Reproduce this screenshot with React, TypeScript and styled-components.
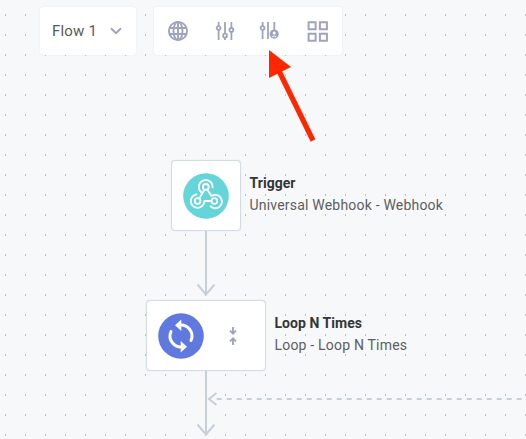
import React from 'react';
import styled, { createGlobalStyle } from 'styled-components';

const GlobalStyle = createGlobalStyle`
  * { box-sizing: border-box; }
  body { margin: 0; font-family: Roboto, "Liberation Sans", sans-serif; }
`;

const Canvas = styled.main`
  position: relative;
  width: 526px;
  height: 439px;
  overflow: hidden;
  background-color: #f7f8fa;
  background-image: conic-gradient(from 90deg at 19px 18px, #bcbdc0 90deg, transparent 0);
  background-size: 20px 20px;
  background-position: -14px -4px;
`;

const TopBar = styled.header`
  position: relative;
  display: flex;
  gap: 18px;
  padding: 7px 0 0 40px;
`;

const Panel = styled.div<{ $width: number }>`
  display: flex;
  align-items: center;
  flex: none;
  width: ${(p) => p.$width}px;
  height: 48px;
  background: #fff;
  border-radius: 3px;
  box-shadow: 0 0 2px rgba(205, 222, 237, 0.6);
`;

const FlowSelect = styled(Panel)`
  justify-content: space-between;
  padding: 0 14px 0 12px;
  color: #5b5b5d;
  font-size: 15px;
  letter-spacing: 0.2px;
`;

const Tools = styled(Panel)`
  padding: 0 14px 0 13px;
`;

const Icon = styled.svg<{ $before?: number }>`
  display: block;
  flex: none;
  margin-left: ${(p) => p.$before ?? 0}px;
  fill: none;
  stroke: #a0a3bf;
`;

const Edges = styled.svg`
  position: absolute;
  inset: 0;
  fill: none;
  stroke: #c5d0d9;
  stroke-width: 2;
`;

const Pointer = styled.svg`
  position: absolute;
  left: 260px;
  top: 45px;
`;

const FlowNode = styled.article<{ $x: number; $y: number }>`
  position: absolute;
  left: ${(p) => p.$x}px;
  top: ${(p) => p.$y}px;
  display: flex;
  gap: 8px;
`;

const NodeCard = styled.div<{ $width: number }>`
  display: flex;
  align-items: center;
  gap: 24.5px;
  width: ${(p) => p.$width}px;
  height: 71px;
  padding-left: 11px;
  background: #fff;
  border: 1px solid #d3dce3;
  border-radius: 4px;
  box-shadow: 0 0 1px rgba(197, 208, 217, 0.8);
`;

const NodeText = styled.div`
  padding: 12px 0 0 0.5px;
  font-size: 14px;
  line-height: 22px;
  letter-spacing: 0.2px;
  color: #5d5e61;
  white-space: nowrap;
`;

const NodeTitle = styled.div`
  font-weight: 700;
  letter-spacing: 0.04px;
  color: #343538;
`;

const Globe = () => (
  <Icon width="22" height="22" viewBox="0 0 22 22" strokeWidth="1.9">
    <circle cx="11" cy="11" r="9.1" />
    <ellipse cx="11" cy="11" rx="4.5" ry="9.1" />
    <path d="M11 2v18M2.7 8h16.6M2.7 14h16.6" />
  </Icon>
);

const Sliders = () => (
  <Icon $before={26} width="20" height="20" viewBox="0 0 20 20" strokeWidth="1.8">
    <path d="M3.6 1v4M3.6 9.2V19M10 1v11.5M10 17v2M16.4 1v5.7M16.4 11v8" />
    <circle cx="3.6" cy="7.1" r="1.9" />
    <circle cx="10" cy="14.6" r="2" />
    <circle cx="16.4" cy="8.9" r="1.9" />
  </Icon>
);

const UserSliders = () => (
  <Icon $before={24} width="20" height="20" viewBox="0 0 20 20" strokeWidth="1.8">
    <path d="M3.6 1v4M3.6 9.2V18M9 1v17M15.3 1v8.5" />
    <circle cx="3.6" cy="7" r="1.9" />
    <circle cx="15.2" cy="13.1" r="4.6" fill="#a0a3bf" stroke="none" />
    <circle cx="15.2" cy="11.9" r="1.5" fill="#fff" stroke="none" />
    <path d="M13.2 15.7q2-1.4 4 0" stroke="#fff" strokeWidth="1" />
  </Icon>
);

const Grid = () => (
  <Icon $before={28} width="21" height="21" viewBox="0 0 21 21" strokeWidth="2">
    <path d="M1.6 1.3h7v7h-7zM12.9 1.3h7v7h-7zM1.6 12.7h7v7h-7zM12.9 12.7h7v7h-7z" />
  </Icon>
);

const Webhook = () => (
  <svg width="46" height="46" viewBox="0 0 46 46" fill="none">
    <circle cx="23" cy="23" r="22.8" fill="#64d5d8" />
    <g stroke="#fff" strokeWidth="1.8" strokeLinecap="round" strokeLinejoin="round">
      <circle cx="22.8" cy="13.9" r="2.9" />
      <circle cx="14.6" cy="28" r="2.9" />
      <circle cx="31.4" cy="28" r="2.9" />
      <path d="M21.4 16.7 16.3 25.4M24.3 16.6 28.4 23.1A6.7 6.7 0 1 1 27.4 33.2" />
      <path d="M28.4 28H21.4A6.8 6.8 0 1 1 13.6 21.3" />
      <path d="M18.2 19.2A6.9 6.9 0 1 1 29.6 14.4" />
    </g>
  </svg>
);

const Loop = () => (
  <svg width="46" height="46" viewBox="0 0 46 46" fill="none">
    <circle cx="23" cy="23" r="22.8" fill="#6079df" />
    <path d="M21 12.2A11 11 0 0 1 33 27.5M25 33.8A11 11 0 0 1 13 18.5" stroke="#fff" strokeWidth="3" strokeLinecap="round" />
    <path d="m17 12.2 6.3-5.7v11.4zM29 33.8l-6.3-5.7v11.4z" fill="#fff" />
  </svg>
);

const Collapse = () => (
  <Icon width="8" height="20" viewBox="0 0 8 20" strokeWidth="1.9">
    <path d="M4 1v6.5M1 4.7l3 3 3-3M4 19v-6.5M1 15.3l3-3 3 3" />
  </Icon>
);

export default function App() {
  return (
    <Canvas>
      <GlobalStyle />
      <Edges width="526" height="439">
        <path d="M206 231v63M197.5 284.5l8.5 10 8.5-10M206 371v63M197.5 424.5l8.5 10 8.5-10" />
        <path d="m216.5 393-7.5 6 7.5 6" />
        <path d="M216.7 399H526" strokeDasharray="5 5" />
      </Edges>
      <TopBar>
        <FlowSelect $width={96}>
          Flow 1
          <Icon width="12" height="8" viewBox="0 0 12 8" strokeWidth="2">
            <path d="m1 1.3 5 4.8 5-4.8" />
          </Icon>
        </FlowSelect>
        <Tools $width={188}>
          <Globe />
          <Sliders />
          <UserSliders />
          <Grid />
        </Tools>
      </TopBar>
      <FlowNode $x={171} $y={160}>
        <NodeCard $width={70}>
          <Webhook />
        </NodeCard>
        <NodeText>
          <NodeTitle>Trigger</NodeTitle>
          Universal Webhook - Webhook
        </NodeText>
      </FlowNode>
      <FlowNode $x={146} $y={300}>
        <NodeCard $width={120}>
          <Loop />
          <Collapse />
        </NodeCard>
        <NodeText>
          <NodeTitle>Loop N Times</NodeTitle>
          Loop - Loop N Times
        </NodeText>
      </FlowNode>
      <Pointer width="60" height="100" viewBox="260 45 60 100">
        <path d="m279 71 34 69.5" stroke="#ff2600" strokeWidth="5.2" />
        <path d="M269 50v28l22-11z" fill="#ff2600" />
      </Pointer>
    </Canvas>
  );
}
